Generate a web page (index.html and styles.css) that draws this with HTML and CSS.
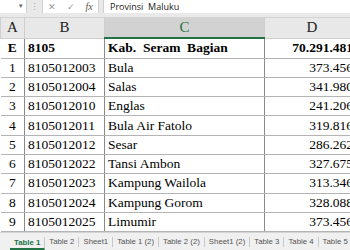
FILE: index.html
```html
<!DOCTYPE html>
<html lang="en">
<head>
    <meta charset="UTF-8">
    <meta name="viewport" content="width=device-width, initial-scale=1.0">
    <title>Provinsi Maluku</title>
    <link rel="stylesheet" href="styles.css">
</head>
<body>
    <div class="formula-bar">
        <div class="name-box"><span class="arrow">&#9662;</span></div>
        <div class="dots">&#8942;</div>
        <div class="fx-box">
            <span class="fx-btn">&#10005;</span>
            <span class="fx-btn">&#10003;</span>
            <span class="fx-btn fx">fx</span>
        </div>
        <div class="formula-input">Provinsi  Maluku</div>
    </div>
    <table class="sheet">
        <colgroup>
            <col class="col-a">
            <col class="col-b">
            <col class="col-c">
            <col class="col-d">
        </colgroup>
        <tr class="col-head">
            <th>A</th>
            <th>B</th>
            <th class="selected">C</th>
            <th>D</th>
        </tr>
        <tr class="total">
            <td class="num">E</td>
            <td>8105</td>
            <td>Kab.  Seram  Bagian</td>
            <td class="val">70.291.481</td>
        </tr>
        <tr><td class="num">1</td><td>8105012003</td><td>Bula</td><td class="val">373.456</td></tr>
        <tr><td class="num">2</td><td>8105012004</td><td>Salas</td><td class="val">341.980</td></tr>
        <tr><td class="num">3</td><td>8105012010</td><td>Englas</td><td class="val">241.206</td></tr>
        <tr><td class="num">4</td><td>8105012011</td><td>Bula Air Fatolo</td><td class="val">319.816</td></tr>
        <tr><td class="num">5</td><td>8105012012</td><td>Sesar</td><td class="val">286.262</td></tr>
        <tr><td class="num">6</td><td>8105012022</td><td>Tansi Ambon</td><td class="val">327.675</td></tr>
        <tr><td class="num">7</td><td>8105012023</td><td>Kampung Wailola</td><td class="val">313.346</td></tr>
        <tr><td class="num">8</td><td>8105012024</td><td>Kampung Gorom</td><td class="val">328.088</td></tr>
        <tr><td class="num">9</td><td>8105012025</td><td>Limumir</td><td class="val">373.456</td></tr>
    </table>
    <div class="tabs">
        <span class="tab active">Table 1</span>
        <span class="tab">Table 2</span>
        <span class="tab">Sheet1</span>
        <span class="tab">Table 1 (2)</span>
        <span class="tab">Table 2 (2)</span>
        <span class="tab">Sheet1 (2)</span>
        <span class="tab">Table 3</span>
        <span class="tab">Table 4</span>
        <span class="tab">Table 5</span>
    </div>
</body>
</html>
```

FILE: styles.css
```css
body {
    margin: 0;
    width: 350px;
    height: 250px;
    overflow: hidden;
    background: #fff;
    font-family: "Liberation Serif", serif;
    position: relative;
}
.formula-bar {
    display: flex;
    height: 13px;
    padding-bottom: 4px;
    background: #e9e9e9;
    border-bottom: 1px solid #d4d4d4;
    font-family: "Open Sans", sans-serif;
}
.name-box {
    width: 26px;
    background: #fff;
    border-right: 1px solid #d0d0d0;
    position: relative;
}
.name-box .arrow {
    position: absolute;
    right: 3px;
    top: 1px;
    font-size: 7px;
    color: #666;
}
.dots {
    width: 15px;
    text-align: center;
    color: #aaa;
    font-size: 9px;
    line-height: 13px;
}
.fx-box {
    width: 55px;
    background: #fff;
    display: flex;
    justify-content: space-around;
    align-items: center;
    border-left: 1px solid #d0d0d0;
    border-right: 1px solid #d0d0d0;
}
.fx-btn {
    color: #999;
    font-size: 9px;
}
.fx-btn.fx {
    font-family: "Liberation Serif", serif;
    font-style: italic;
    color: #555;
    font-size: 10px;
}
.formula-input {
    flex: 1;
    margin-left: 4px;
    background: #fff;
    border-left: 1px solid #d0d0d0;
    font-size: 9px;
    line-height: 13px;
    padding-left: 6px;
    color: #222;
    white-space: pre;
}
.sheet {
    border-collapse: collapse;
    table-layout: fixed;
    width: 359px;
}
.col-a { width: 24px; }
.col-b { width: 80px; }
.col-c { width: 160px; }
.col-d { width: 95px; }
.sheet th {
    height: 19px;
    padding: 0;
    background: #e8e8e8;
    border: 1px solid #cfcfcf;
    border-top: none;
    font-weight: normal;
    font-size: 15px;
    color: #222;
    line-height: 17px;
}
.sheet th.selected {
    background: #d2d2d2;
    color: #217346;
    border-bottom: 2px solid #217346;
}
.sheet td {
    height: 18.3px;
    padding: 0 3px;
    border: 1px solid #8a8a8a;
    border-top-color: #b4b4b4;
    border-bottom-color: #b4b4b4;
    font-size: 13.5px;
    line-height: 16px;
    white-space: pre;
    overflow: hidden;
    color: #000;
}
.sheet td:first-child {
    border-left: none;
}
.sheet td.num {
    text-align: center;
    padding: 0;
}
.sheet td.val {
    text-align: right;
    padding-right: 6px;
}
.total td {
    height: 18.5px;
    font-weight: bold;
}
.tabs {
    position: absolute;
    left: 0;
    top: 232px;
    width: 350px;
    height: 18px;
    display: flex;
    align-items: center;
    padding-left: 10px;
    box-sizing: border-box;
    background: #f0f0f0;
    border-top: 1px solid #d4d4d4;
    font-family: "Liberation Sans", sans-serif;
    font-size: 7.8px;
    color: #555;
    white-space: nowrap;
}
.tab {
    padding: 0 4px;
    border-right: 1px solid #c8c8c8;
    line-height: 10px;
}
.tab.active {
    color: #217346;
    font-weight: bold;
    border-bottom: 2px solid #217346;
    line-height: 11px;
    margin-top: 3px;
}
```
